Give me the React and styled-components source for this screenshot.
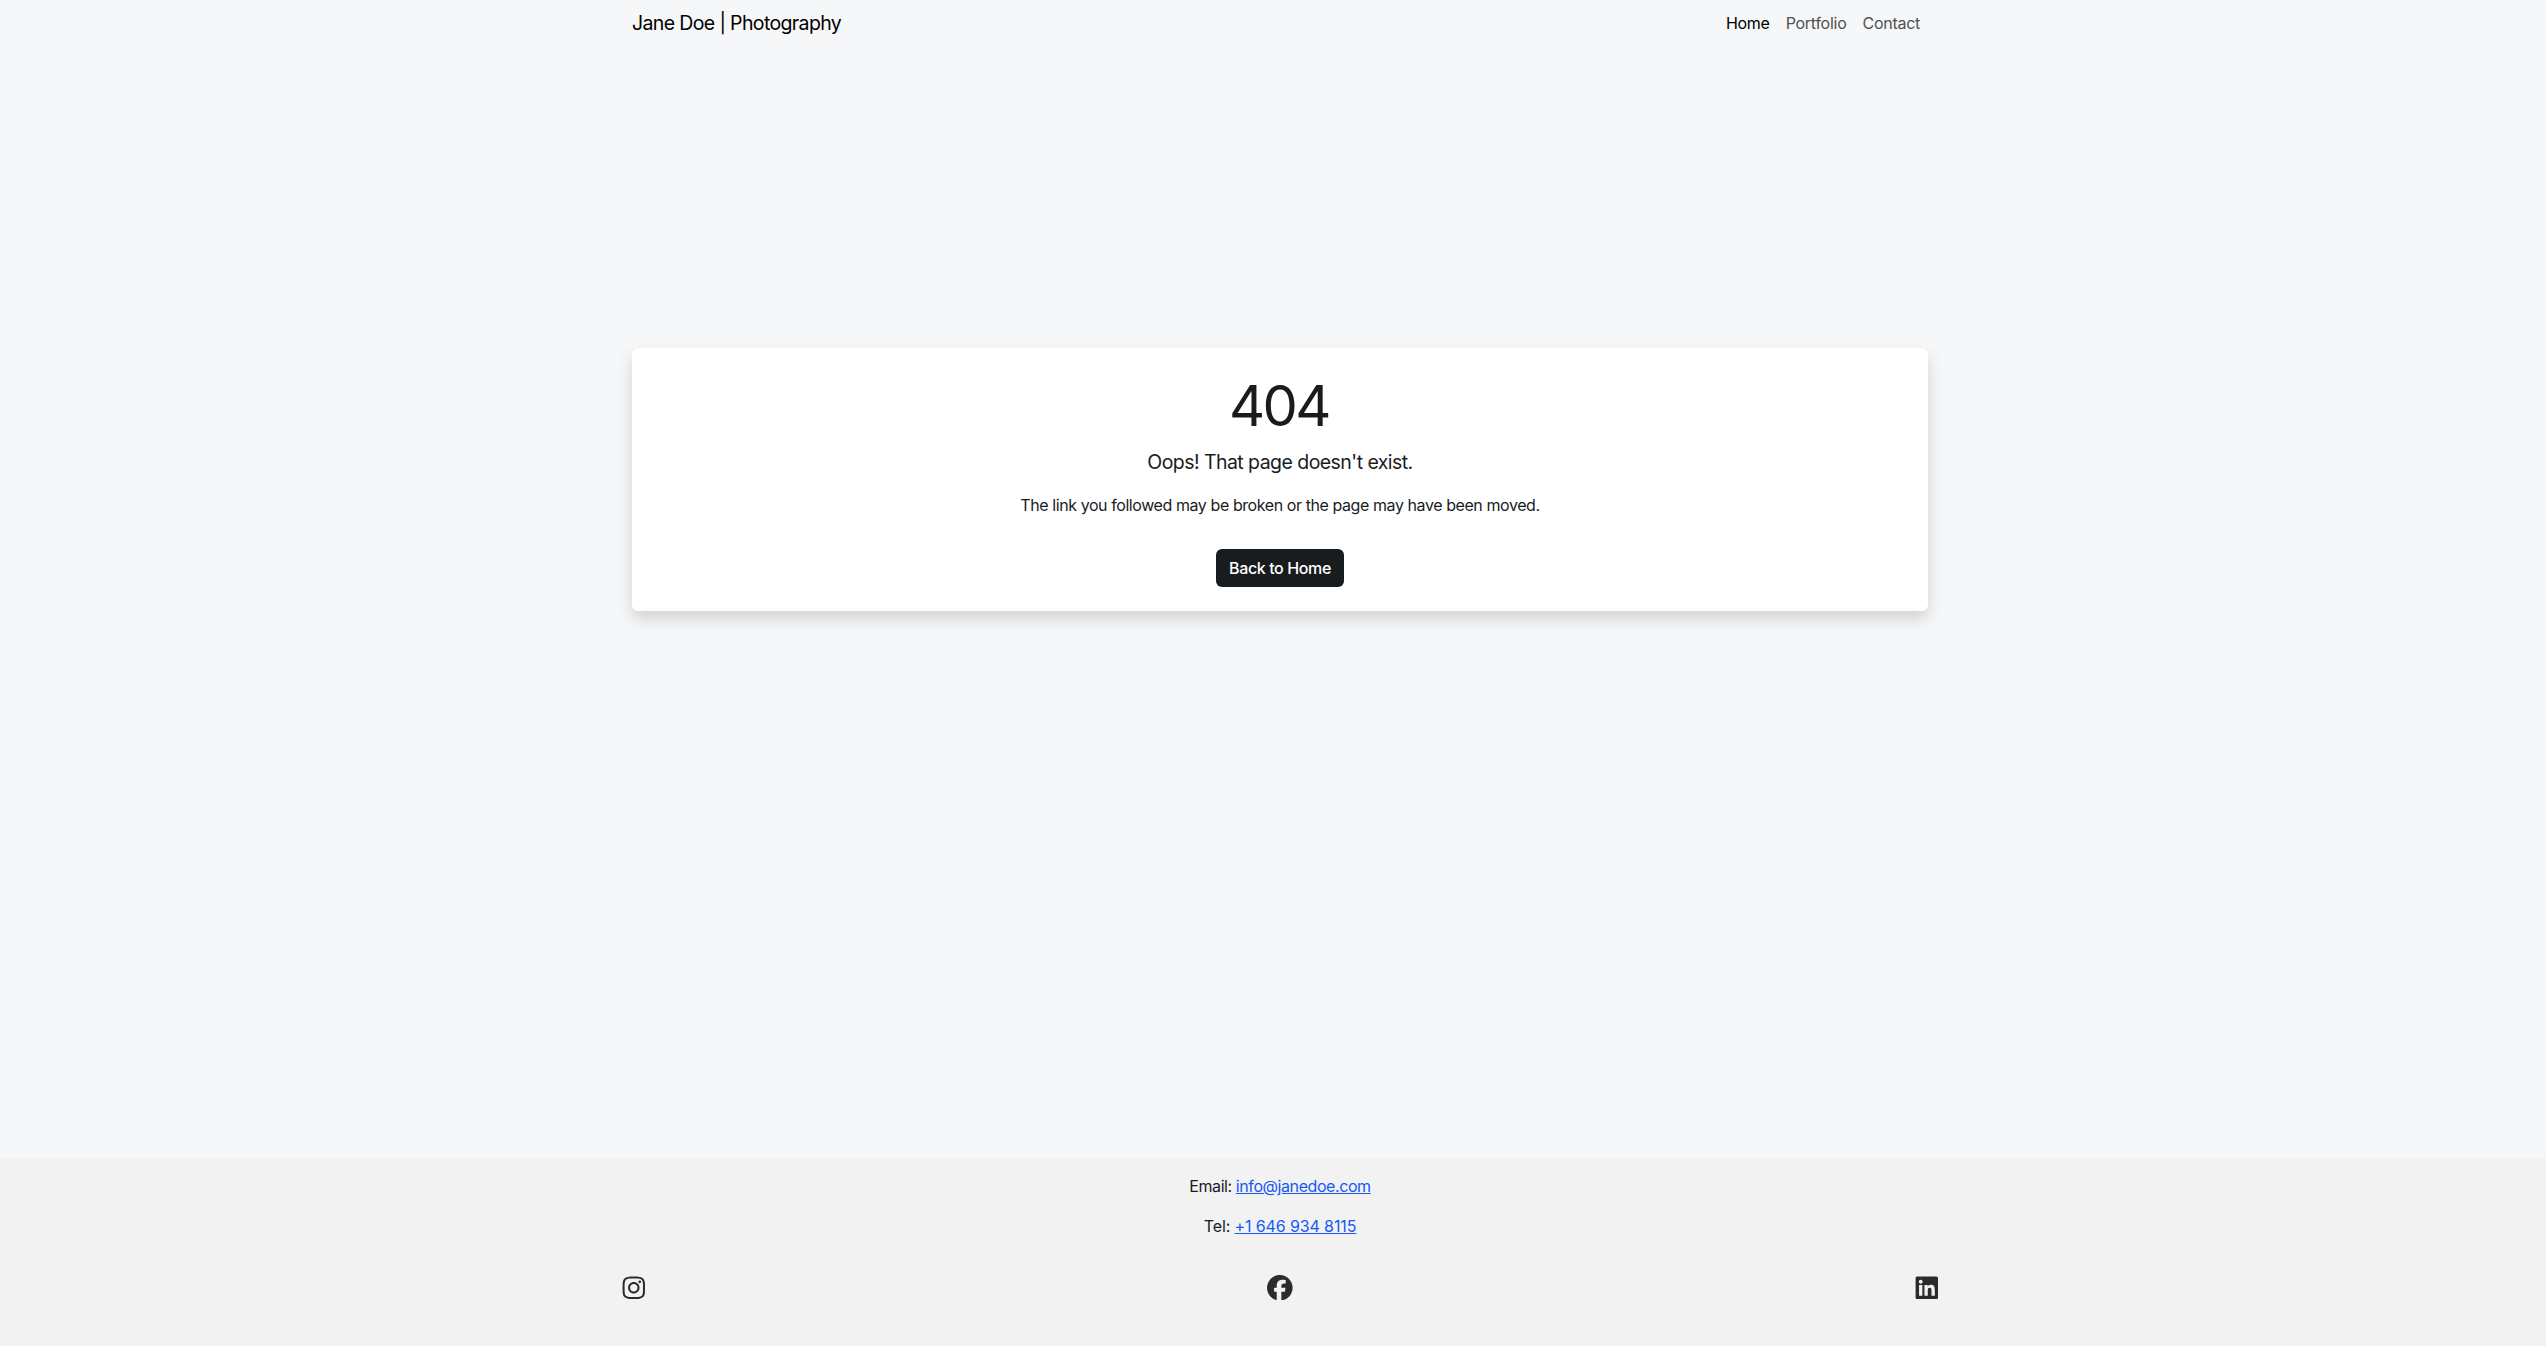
import React from "react";
import styled, { createGlobalStyle } from "styled-components";
import { FaFacebook, FaInstagram, FaLinkedin } from "react-icons/fa6";

const GlobalStyle = createGlobalStyle`
  *, *::before, *::after { box-sizing: border-box; }
  html, body { margin: 0; overflow: hidden; background: #f6f7f9; }
  body {
    font-family: Inter, "Liberation Sans", sans-serif;
    font-size: 16px;
    line-height: 24px;
    color: #191c1f;
  }
  p, h1 { margin: 0; }
`;

const Page = styled.div`
  display: flex;
  flex-direction: column;
  width: 2560px;
  height: 1346px;
`;

const Container = styled.div`
  width: 1320px;
  margin: 0 auto;
  padding: 0 12px;
`;

const NavBar = styled(Container).attrs({ as: "nav" })`
  display: flex;
  align-items: center;
  justify-content: space-between;
  height: 46px;
`;

const Brand = styled.a`
  font-size: 19.5px;
  line-height: 30px;
  color: #000;
  letter-spacing: -0.63px;
`;

const NavLinks = styled.div`
  display: flex;
  gap: 16px;
  padding-right: 8px;
`;

const NavLink = styled.a`
  color: ${(p) => (p.$active ? "#000" : "#4f5151")};
  letter-spacing: -0.27px;
`;

const Main = styled(Container).attrs({ as: "main" })`
  flex: 1;
  padding-top: 302px;
`;

const Card = styled.section`
  display: flex;
  flex-direction: column;
  align-items: center;
  height: 263px;
  padding: 24px;
  background: #fff;
  border-radius: 6px;
  box-shadow: 0 8px 16px rgba(0, 0, 0, 0.15);
`;

const Code = styled.h1`
  padding-top: 1px;
  font-size: 56px;
  line-height: 67.2px;
  font-weight: 400;
  margin: 0 0 7px -2px;
  letter-spacing: -2.6px;
`;

const Lead = styled.p`
  font-size: 19.5px;
  line-height: 30px;
  font-weight: 400;
  margin-bottom: 16px;
  letter-spacing: -0.55px;
`;

const Detail = styled.p`
  letter-spacing: -0.42px;
`;

const HomeButton = styled.a`
  display: flex;
  align-items: center;
  justify-content: center;
  width: 128px;
  height: 38px;
  margin-top: 32px;
  border-radius: 6px;
  background: #191c1f;
  color: #fff;
  font-weight: 500;
  letter-spacing: -0.38px;
`;

const Footer = styled.footer`
  height: 188px;
  padding-top: 16px;
  background: #f2f2f2;
`;

const ContactLine = styled.p`
  margin-bottom: 16px;
  text-align: center;
  letter-spacing: ${(p) => p.$tracking};
`;

const ContactLink = styled.a`
  color: #1659f6;
  text-decoration: underline;
`;

const SocialRow = styled.div`
  display: flex;
  align-items: center;
  justify-content: space-between;
  width: 1320px;
  height: 67px;
  margin: 0 auto;
  padding-left: 0.5px;
  font-size: 25.6px;
  color: #2b2b2b;
`;

export default function App() {
  return (
    <>
      <GlobalStyle />
      <Page>
        <NavBar>
          <Brand>Jane Doe | Photography</Brand>
          <NavLinks>
            <NavLink $active>Home</NavLink>
            <NavLink>Portfolio</NavLink>
            <NavLink>Contact</NavLink>
          </NavLinks>
        </NavBar>
        <Main>
          <Card>
            <Code>404</Code>
            <Lead>Oops! That page doesn't exist.</Lead>
            <Detail>The link you followed may be broken or the page may have been moved.</Detail>
            <HomeButton>Back to Home</HomeButton>
          </Card>
        </Main>
        <Footer>
          <ContactLine $tracking="-0.42px">
            Email: <ContactLink>info@janedoe.com</ContactLink>
          </ContactLine>
          <ContactLine $tracking="-0.12px">
            Tel: <ContactLink>+1 646 934 8115</ContactLink>
          </ContactLine>
          <SocialRow>
            <FaInstagram />
            <FaFacebook />
            <FaLinkedin />
          </SocialRow>
        </Footer>
      </Page>
    </>
  );
}
